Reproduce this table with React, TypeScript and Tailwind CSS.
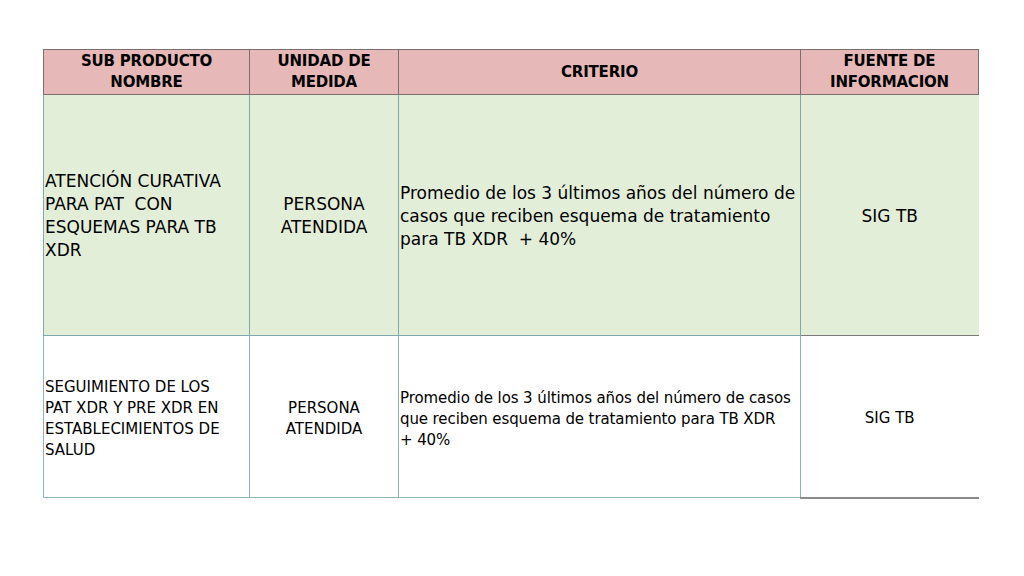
const font = { fontFamily: '"DejaVu Sans", "Open Sans", sans-serif' };

export default function App() {
  return (
    <div className="w-[1024px] h-[576px] bg-white" style={font}>
      <div className="pt-[49px] pl-[43px]">
        <table className="border-collapse table-fixed text-black">
          <colgroup>
            <col className="w-[206px]" />
            <col className="w-[149px]" />
            <col className="w-[402px]" />
            <col className="w-[178px]" />
          </colgroup>
          <thead>
            <tr className="h-[45px] bg-[#e6b8b7] text-[15px] font-bold leading-[21px] tracking-[-0.2px]">
              <th className="border border-[#7a6e6e] text-center align-middle">
                SUB PRODUCTO
                <br />
                NOMBRE
              </th>
              <th className="border border-[#7a6e6e] text-center align-middle">
                UNIDAD DE
                <br />
                MEDIDA
              </th>
              <th className="border border-[#7a6e6e] text-center align-middle">CRITERIO</th>
              <th className="border border-[#7a6e6e] text-center align-middle">
                FUENTE DE
                <br />
                INFORMACION
              </th>
            </tr>
          </thead>
          <tbody>
            <tr className="h-[241px] bg-[#e3eed9] text-[17px] leading-[23px]">
              <td className="border border-[#7fa9b0] pl-[1px] pt-[2px] align-middle">
                ATENCIÓN CURATIVA
                <br />
                PARA PAT&nbsp; CON
                <br />
                ESQUEMAS PARA TB
                <br />
                XDR
              </td>
              <td className="border border-[#7fa9b0] pt-[2px] text-center align-middle">
                PERSONA
                <br />
                ATENDIDA
              </td>
              <td className="border border-[#7fa9b0] pl-[1px] pt-[2px] align-middle whitespace-nowrap">
                Promedio de los 3 últimos años del número de
                <br />
                casos que reciben esquema de tratamiento
                <br />
                para TB XDR&nbsp; + 40%
              </td>
              <td className="border border-[#7a7a7a] border-r-0 pt-[2px] text-center align-middle">SIG TB</td>
            </tr>
            <tr className="h-[162px] bg-white text-[15px] leading-[21px]">
              <td className="border border-[#8fb3bb] pl-[1px] pt-[5px] align-middle whitespace-nowrap">
                SEGUIMIENTO DE LOS
                <br />
                PAT XDR Y PRE XDR EN
                <br />
                ESTABLECIMIENTOS DE
                <br />
                SALUD
              </td>
              <td className="border border-[#8fb3bb] pt-[5px] text-center align-middle">
                PERSONA
                <br />
                ATENDIDA
              </td>
              <td className="border border-[#8fb3bb] pl-[1px] pt-[5px] align-middle whitespace-nowrap tracking-[-0.1px]">
                Promedio de los 3 últimos años del número de casos
                <br />
                que reciben esquema de tratamiento para TB XDR
                <br />+ 40%
              </td>
              <td className="border border-[#8a8a8a] border-r-0 border-b-2 pt-[5px] text-center align-middle">SIG TB</td>
            </tr>
          </tbody>
        </table>
      </div>
    </div>
  );
}
